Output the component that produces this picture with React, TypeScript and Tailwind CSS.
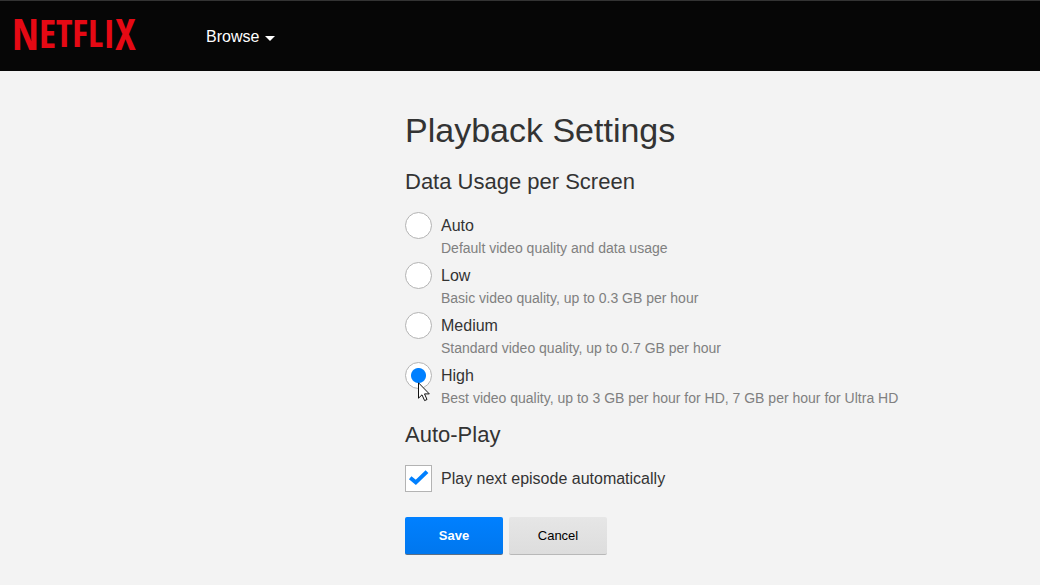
import { useState } from "react";

const qualities = [
  { id: "auto", label: "Auto", hint: "Default video quality and data usage" },
  { id: "low", label: "Low", hint: "Basic video quality, up to 0.3 GB per hour" },
  { id: "medium", label: "Medium", hint: "Standard video quality, up to 0.7 GB per hour" },
  { id: "high", label: "High", hint: "Best video quality, up to 3 GB per hour for HD, 7 GB per hour for Ultra HD" },
];

// The outer letters are taller, so the wordmark's lower edge forms an arc.
function Logo() {
  return (
    <a href="#home" className="block w-[120px]" aria-label="Netflix home">
      <svg viewBox="0 0 120 34" className="block h-[34px] w-[120px] overflow-visible">
        <text
          x="-2"
          y="31"
          fill="#e50914"
          className="[font-family:'Open_Sans_Condensed','Roboto_Condensed','Liberation_Sans',sans-serif] text-[38px] font-bold"
        >
          <tspan className="text-[43px]">N</tspan>
          <tspan dy="-2" className="text-[40px]">E</tspan>
          <tspan dy="-1">TFL</tspan>
          <tspan dy="1" className="text-[40px]">I</tspan>
          <tspan dy="2" className="text-[43px]">X</tspan>
        </text>
      </svg>
    </a>
  );
}

function Cursor() {
  return (
    <svg viewBox="0 0 12 20" className="pointer-events-none absolute top-5 left-[13px] h-5 w-3" aria-hidden="true">
      <path
        d="M.5 .8V16.2L4 12.8L6.6 18.6L9 17.5L6.5 11.9H11.3Z"
        fill="#fff"
        stroke="#111"
        strokeWidth="1"
      />
    </svg>
  );
}

export default function App() {
  const [quality, setQuality] = useState("high");
  const [autoPlay, setAutoPlay] = useState(true);

  return (
    <div className="min-h-screen bg-[#f3f3f3] [font-family:'Liberation_Sans',Arial,sans-serif] text-[#333]">
      <header className="flex h-[71px] items-center gap-[72px] border-t border-[#333] bg-[#060606] pl-[14px]">
        <Logo />
        <button type="button" className="flex items-center gap-[6px] pt-[2px] text-base leading-6 text-white">
          Browse
          <svg viewBox="0 0 10 5" className="mt-[2px] h-[5px] w-[10px]" aria-hidden="true">
            <path d="M0 0H10L5 5Z" fill="#fff" />
          </svg>
        </button>
      </header>

      <main className="pt-[39px] pr-6 pb-[30px] pl-[405px]">
        <h1 className="text-[34px] leading-10">Playback Settings</h1>
        <form onSubmit={(e) => e.preventDefault()}>
          <fieldset className="mt-[18px]">
            <legend className="mb-4 text-[22px] leading-7">Data Usage per Screen</legend>
            {qualities.map((q) => (
              <div key={q.id} className="flex min-h-[50px] items-start gap-[9px]">
                <div className="relative h-[27px] w-[27px] shrink-0">
                  <input
                    type="radio"
                    id={q.id}
                    name="quality"
                    checked={quality === q.id}
                    onChange={() => setQuality(q.id)}
                    aria-describedby={q.id + "-hint"}
                    className="block h-[27px] w-[27px] appearance-none rounded-full border border-[#b3b3b3] bg-white checked:bg-[radial-gradient(circle,#0080ff_7px,#fff_8px)]"
                  />
                  {q.id === "high" && <Cursor />}
                </div>
                <div>
                  <label htmlFor={q.id} className="block text-base leading-7">
                    {q.label}
                  </label>
                  <p id={q.id + "-hint"} className="text-sm leading-4 text-[#808080]">
                    {q.hint}
                  </p>
                </div>
              </div>
            ))}
          </fieldset>

          <h2 className="mt-[9px] text-[22px] leading-7">Auto-Play</h2>
          <div className="mt-4 flex items-center gap-[9px]">
            <div className="relative h-[27px] w-[27px] shrink-0">
              <input
                type="checkbox"
                id="autoplay"
                checked={autoPlay}
                onChange={(e) => setAutoPlay(e.target.checked)}
                className="block h-[27px] w-[27px] appearance-none border border-[#b3b3b3] bg-white"
              />
              {autoPlay && (
                <svg viewBox="0 0 27 27" className="pointer-events-none absolute inset-0" aria-hidden="true">
                  <path d="M5.2 12.8L10.8 17.4L22 6.6" fill="none" stroke="#0080ff" strokeWidth="4" />
                </svg>
              )}
            </div>
            <label htmlFor="autoplay" className="text-base leading-[26px]">
              Play next episode automatically
            </label>
          </div>

          <div className="mt-[25px] flex gap-[6px] text-[13px] leading-5">
            <button
              type="submit"
              className="h-[38px] w-[98px] rounded-xs border-b border-[#5c6f85] bg-linear-to-b from-[#0080ff] to-[#0077ee] font-bold text-white"
            >
              Save
            </button>
            <button
              type="button"
              className="h-[38px] w-[98px] rounded-xs border-b border-[#b8b8b8] bg-linear-to-b from-[#e6e6e6] to-[#dddddd] text-black"
            >
              Cancel
            </button>
          </div>
        </form>
      </main>
    </div>
  );
}
